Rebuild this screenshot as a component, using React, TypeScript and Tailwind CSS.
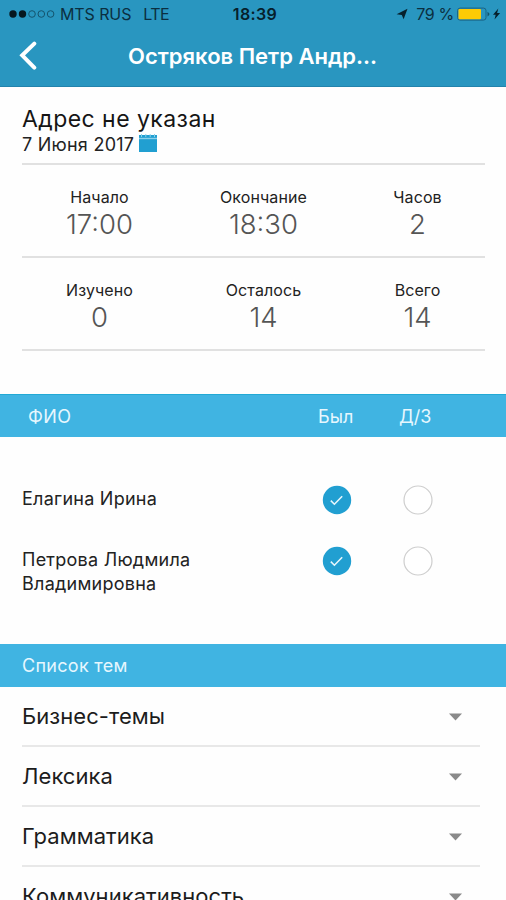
import React from "react";

type Stat = { label: string; value: string };

const timeStats: Stat[] = [
  { label: "Начало", value: "17:00" },
  { label: "Окончание", value: "18:30" },
  { label: "Часов", value: "2" },
];

const hourStats: Stat[] = [
  { label: "Изучено", value: "0" },
  { label: "Осталось", value: "14" },
  { label: "Всего", value: "14" },
];

const topics = ["Бизнес-темы", "Лексика", "Грамматика", "Коммуникативность"];

function StatusBar() {
  return (
    <div className="grid h-7 grid-cols-3 items-center pl-[9px] pr-[5px] text-[16px] leading-none text-[#0b2f40]">
      <div className="flex items-center">
        <svg width="46" height="10" viewBox="0 0 46 10">
          <circle cx="4" cy="5" r="3.7" fill="#06171f" />
          <circle cx="13.5" cy="5" r="3.7" fill="#06171f" />
          <g fill="none" stroke="#14546e" strokeWidth="1">
            <circle cx="23" cy="5" r="3.3" />
            <circle cx="32.3" cy="5" r="3.3" />
            <circle cx="41.6" cy="5" r="3.3" />
          </g>
        </svg>
        <span className="ml-[5px] whitespace-nowrap tracking-[-0.1px]">MTS RUS</span>
        <span className="ml-3 tracking-[-0.6px]">LTE</span>
      </div>
      <span className="text-center font-semibold tracking-[0.4px] text-[#06202c]">18:39</span>
      <div className="flex items-center justify-end">
        <svg width="12" height="12" viewBox="0 0 12 12" fill="#06202c">
          <path d="M11.500 .8 7.600 11.200 5.800 7 .6 6.200Z" />
        </svg>
        <span className="ml-2 whitespace-nowrap tracking-[-0.3px]">79 %</span>
        <svg className="ml-[3px]" width="34" height="14" viewBox="0 0 34 14">
          <rect x=".6" y="1.100" width="28.400" height="12" rx="2.500" fill="none" stroke="#1a6282" strokeWidth="1" />
          <rect x="1.500" y="2" width="22.500" height="10.200" rx="1" fill="#fccb05" />
          <path d="M30.500 4.800Q34.500 7.100 30.500 9.400Z" fill="#14546e" />
        </svg>
        <svg className="ml-px" width="9" height="12" viewBox="0 0 8 12" fill="#06202c">
          <path d="M5.800.5.5 6.800h2.700L2 11.500 7.600 5H4.600Z" />
        </svg>
      </div>
    </div>
  );
}

function Stats({ items }: { items: Stat[] }) {
  return (
    <div className="grid h-[93px] grid-cols-[155px_173px_135px] border-b-2 border-[#e1e1e1] pt-[22px] text-center">
      {items.map((s) => (
        <div key={s.label}>
          <div className="text-[16px] leading-5 tracking-[0.1px] text-[#222]">{s.label}</div>
          <div className="text-[27.5px] font-light leading-[34px] text-[#555]">{s.value}</div>
        </div>
      ))}
    </div>
  );
}

function Checked() {
  return (
    <svg width="30" height="30" viewBox="0 0 30 30">
      <circle cx="15" cy="15" r="14.2" fill="#219fd1" />
      <path d="m8.8 15.6 3.6 3.6 7.800-8" fill="none" stroke="#e6f6fc" strokeWidth="1.6" />
    </svg>
  );
}

function Unchecked() {
  return (
    <svg width="30" height="30" viewBox="0 0 30 30">
      <circle cx="15" cy="15" r="14" fill="#fff" stroke="#cecece" strokeWidth="1.2" />
    </svg>
  );
}

function Student({ children }: { children: React.ReactNode }) {
  return (
    <div className="flex h-[61px] items-start">
      <div className="w-[300px] pt-[2px] text-[18px] leading-6 tracking-[0.25px] text-[#222]">{children}</div>
      <Checked />
      <div className="ml-[51px]">
        <Unchecked />
      </div>
    </div>
  );
}

export default function App() {
  return (
    <div className="h-[900px] w-[506px] overflow-hidden bg-[#fefefe] font-['Inter','Liberation_Sans',sans-serif]">
      <header className="h-[87px] border-b border-[#2383ac] bg-[#2996c0]">
        <StatusBar />
        <div className="flex h-[56px] items-center">
          <svg className="ml-[18px]" width="20" height="30" viewBox="0 0 20 30">
            <path d="M16.300 2.600 4.200 14.300l12.100 12.300" fill="none" stroke="#fff" strokeWidth="4" strokeLinecap="round" />
          </svg>
          <h1 className="ml-[90px] whitespace-nowrap text-[22px] font-semibold text-white">Остряков Петр Андр...</h1>
        </div>
      </header>

      <section className="ml-[22px] w-[463px]">
        <div className="h-[78px] border-b-2 border-[#e1e1e1] pt-[18px]">
          <div className="text-[23px] leading-7 tracking-[0.45px] text-[#151515]">Адрес не указан</div>
          <div className="flex items-center">
            <span className="text-[18px] leading-6 tracking-[0.25px] text-[#222]">7 Июня 2017</span>
            <svg className="-mt-1 ml-[5px]" width="18" height="18" viewBox="0 0 18 18">
              <path d="M0 1h18v17H0Z" fill="#219fd1" />
              <path d="M0 4.500h18" stroke="#8bd0ea" strokeWidth="1.4" />
              <path d="M2.500 0v3M6.800 0v3M11.200 0v3M15.500 0v3" stroke="#8bd0ea" strokeWidth="1" />
            </svg>
          </div>
        </div>
        <Stats items={timeStats} />
        <Stats items={hourStats} />
      </section>

      <div className="mt-[43px] flex h-[43px] items-center border-t border-[#22a9d5] bg-[#40b4e2] pl-7 text-[18px] text-[#e6f7fe]">
        <span className="w-[290px] tracking-[0.4px]">ФИО</span>
        <span className="w-[81px]">Был</span>
        <span>Д/З</span>
      </div>

      <section className="h-[207px] pl-[22px] pt-[48px]">
        <Student>Елагина Ирина</Student>
        <Student>
          Петрова Людмила
          <br />
          Владимировна
        </Student>
      </section>

      <div className="flex h-[43px] items-center bg-[#40b4e2] pl-[22px] text-[18px] tracking-[0.3px] text-[#e6f7fe]">Список тем</div>

      <ul className="ml-[22px] w-[458px]">
        {topics.map((t) => (
          <li key={t} className="flex h-[60px] items-center justify-between border-b-2 border-[#e8e8e8] pr-[18px]">
            <span className="text-[22px] tracking-[0.05px] text-[#1c1c1c]">{t}</span>
            <svg className="mt-px" width="13" height="8" viewBox="0 0 13 8">
              <path d="M0 .5h13L6.500 7.500Z" fill="#8a8a8a" />
            </svg>
          </li>
        ))}
      </ul>
    </div>
  );
}
